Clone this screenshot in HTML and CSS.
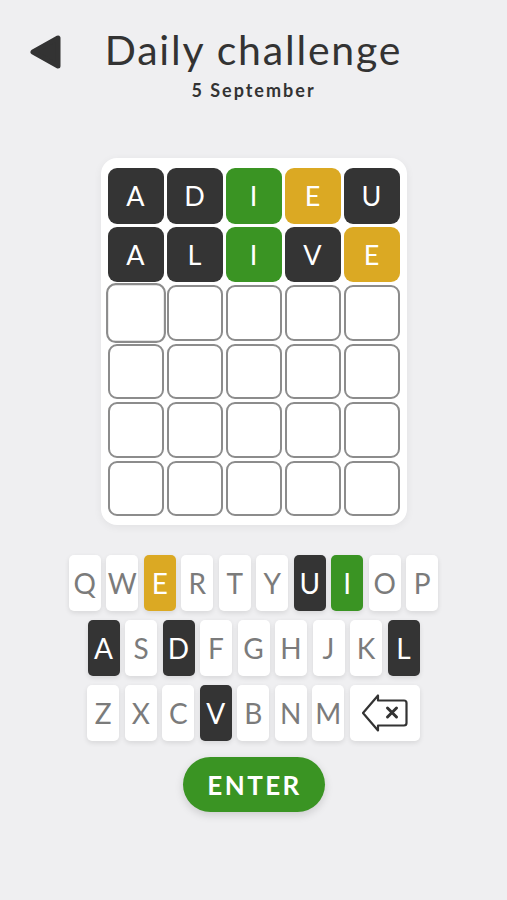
FILE: index.html
```html
<!DOCTYPE html>
<html>
<head>
<meta charset="utf-8">
<link rel="stylesheet" href="styles.css">
</head>
<body>
<div class="page">
  <header class="header">
    <div class="back">
      <svg width="34" height="36" viewBox="0 0 34 36"><path d="M4 18 L29 4 V32 Z" fill="#333" stroke="#333" stroke-width="5" stroke-linejoin="round"/></svg>
    </div>
    <div class="titles">
      <h1 class="title">Daily challenge</h1>
      <div class="date">5 September</div>
    </div>
    <div></div>
  </header>

  <section class="board">
    <div class="cell dark">A</div><div class="cell dark">D</div><div class="cell green">I</div><div class="cell yellow">E</div><div class="cell dark">U</div>
    <div class="cell dark">A</div><div class="cell dark">L</div><div class="cell green">I</div><div class="cell dark">V</div><div class="cell yellow">E</div>
    <div class="cell empty active"></div><div class="cell empty"></div><div class="cell empty"></div><div class="cell empty"></div><div class="cell empty"></div>
    <div class="cell empty"></div><div class="cell empty"></div><div class="cell empty"></div><div class="cell empty"></div><div class="cell empty"></div>
    <div class="cell empty"></div><div class="cell empty"></div><div class="cell empty"></div><div class="cell empty"></div><div class="cell empty"></div>
    <div class="cell empty"></div><div class="cell empty"></div><div class="cell empty"></div><div class="cell empty"></div><div class="cell empty"></div>
  </section>

  <section class="keyboard">
    <div class="krow">
      <div class="key">Q</div><div class="key">W</div><div class="key yellow">E</div><div class="key">R</div><div class="key">T</div><div class="key">Y</div><div class="key dark">U</div><div class="key green">I</div><div class="key">O</div><div class="key">P</div>
    </div>
    <div class="krow">
      <div class="key dark">A</div><div class="key">S</div><div class="key dark">D</div><div class="key">F</div><div class="key">G</div><div class="key">H</div><div class="key">J</div><div class="key">K</div><div class="key dark">L</div>
    </div>
    <div class="krow">
      <div class="key">Z</div><div class="key">X</div><div class="key">C</div><div class="key dark">V</div><div class="key">B</div><div class="key">N</div><div class="key">M</div>
      <div class="key wide">
        <svg width="48" height="40" viewBox="0 0 48 40"><path d="M2 20 L17 2.5 V7.5 H43 a2.5 2.5 0 0 1 2.5 2.5 V30 a2.5 2.5 0 0 1 -2.5 2.5 H17 V37.5 Z" fill="none" stroke="#333" stroke-width="2.2" stroke-linejoin="round"/><path d="M26.5 15 L35.5 24 M35.5 15 L26.5 24" stroke="#333" stroke-width="3" stroke-linecap="round"/></svg>
      </div>
    </div>
  </section>

  <div class="enter-wrap">
    <button class="enter">ENTER</button>
  </div>
</div>
</body>
</html>
```

FILE: styles.css
```css
* { box-sizing: border-box; }
html, body {
  margin: 0;
  padding: 0;
  background: #efeff1;
}
body {
  font-family: "Lato", "Noto Sans", sans-serif;
  color: #333;
}
.page {
  width: 507px;
  height: 900px;
  padding-top: 26px;
}
.header {
  display: grid;
  grid-template-columns: 1fr auto 1fr;
  align-items: start;
}
.back {
  padding-left: 29px;
  padding-top: 8px;
}
.back svg { display: block; }
.titles {
  text-align: center;
}
.title {
  margin: 0;
  font-size: 41px;
  line-height: 48px;
  font-weight: 400;
  color: #333;
  letter-spacing: 1.8px;
}
.date {
  margin-top: 6px;
  font-size: 18px;
  line-height: 20px;
  font-weight: 700;
  color: #333;
  letter-spacing: 2px;
}
.board {
  margin: 58px auto 0;
  width: 306px;
  background: #fff;
  border-radius: 16px;
  padding: 10px 7px 9px;
  display: grid;
  grid-template-columns: repeat(5, 56px);
  grid-auto-rows: 55.5px;
  gap: 3px;
  box-shadow: 0 2px 8px rgba(0,0,0,0.06);
}
.cell {
  border-radius: 9px;
  display: flex;
  align-items: center;
  justify-content: center;
  font-size: 27px;
  font-weight: 400;
  color: #fff;
}
.cell.dark { background: #343434; }
.cell.green { background: #3a9423; }
.cell.yellow { background: #dba923; }
.cell.empty {
  border: 2px solid #8c8c8c;
  background: #fff;
}
.cell.active {
  transform: scale(1.07);
}
.keyboard {
  margin-top: 30px;
  display: flex;
  flex-direction: column;
  align-items: center;
  gap: 9px;
}
.krow {
  display: flex;
  gap: 5.5px;
}
.key {
  width: 32px;
  height: 56px;
  background: #fff;
  border-radius: 5px;
  display: flex;
  align-items: center;
  justify-content: center;
  font-size: 28px;
  font-weight: 400;
  color: #7b7b7b;
  box-shadow: 0 2px 5px rgba(0,0,0,0.10);
}
.key.dark { background: #343434; color: #fff; }
.key.green { background: #3a9423; color: #fff; }
.key.yellow { background: #dba923; color: #fff; }
.key.wide { width: 70px; }
.key.wide svg { display: block; }
.enter-wrap {
  display: flex;
  justify-content: center;
  margin-top: 16px;
}
.enter {
  width: 142px;
  height: 55px;
  border: none;
  border-radius: 28px;
  background: #3a9423;
  color: #fff;
  font-family: "Lato", "Noto Sans", sans-serif;
  font-size: 26px;
  font-weight: 700;
  letter-spacing: 2.4px;
  box-shadow: 0 3px 8px rgba(0,0,0,0.15);
  padding: 0 0 0 2px;
}
```
